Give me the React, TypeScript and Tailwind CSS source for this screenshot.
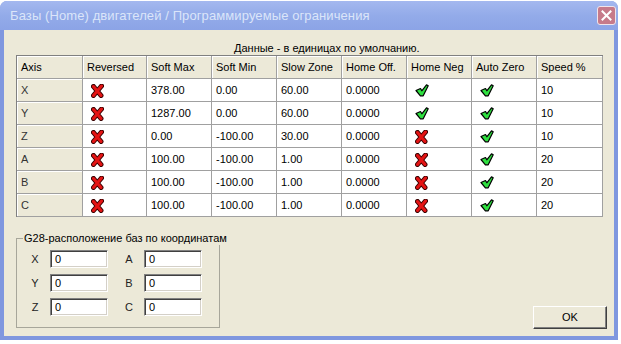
const columns = [
  { title: "Axis", w: "w-[66px]" },
  { title: "Reversed", w: "w-[64px]" },
  { title: "Soft Max", w: "w-[65px]" },
  { title: "Soft Min", w: "w-[65px]" },
  { title: "Slow Zone", w: "w-[65px]" },
  { title: "Home Off.", w: "w-[65px]" },
  { title: "Home Neg", w: "w-[65px]" },
  { title: "Auto Zero", w: "w-[65px]" },
  { title: "Speed %", w: "w-[66px]" },
];

type Row = {
  axis: string;
  reversed: boolean;
  softMax: string;
  softMin: string;
  slowZone: string;
  homeOff: string;
  homeNeg: boolean;
  autoZero: boolean;
  speed: string;
};

const rows: Row[] = [
  { axis: "X", reversed: false, softMax: "378.00", softMin: "0.00", slowZone: "60.00", homeOff: "0.0000", homeNeg: true, autoZero: true, speed: "10" },
  { axis: "Y", reversed: false, softMax: "1287.00", softMin: "0.00", slowZone: "60.00", homeOff: "0.0000", homeNeg: true, autoZero: true, speed: "10" },
  { axis: "Z", reversed: false, softMax: "0.00", softMin: "-100.00", slowZone: "30.00", homeOff: "0.0000", homeNeg: false, autoZero: true, speed: "10" },
  { axis: "A", reversed: false, softMax: "100.00", softMin: "-100.00", slowZone: "1.00", homeOff: "0.0000", homeNeg: false, autoZero: true, speed: "20" },
  { axis: "B", reversed: false, softMax: "100.00", softMin: "-100.00", slowZone: "1.00", homeOff: "0.0000", homeNeg: false, autoZero: true, speed: "20" },
  { axis: "C", reversed: false, softMax: "100.00", softMin: "-100.00", slowZone: "1.00", homeOff: "0.0000", homeNeg: false, autoZero: true, speed: "20" },
];

function CrossIcon() {
  return (
    <svg width="13" height="14" viewBox="0 0 13 14" className="block">
      <path d="M2.5 2.5 L10 11.5 M10.5 2 L2.5 11.5" stroke="#3a0000" strokeWidth="5" strokeLinecap="round" />
      <path d="M2.5 2.5 L10 11.5 M10.5 2 L2.5 11.5" stroke="#e41414" strokeWidth="3" strokeLinecap="round" />
    </svg>
  );
}

function CheckIcon() {
  return (
    <svg width="14" height="13" viewBox="0 0 14 13" className="block">
      <path
        d="M1 6.5 L5.5 4.5 L6.8 6.8 L11.5 0.8 L13.2 1.8 L8.2 11.8 L5.4 11.8 Z"
        fill="#2fe040"
        stroke="#000"
        strokeWidth="1.2"
        strokeLinejoin="round"
      />
    </svg>
  );
}

function Flag({ on }: { on: boolean }) {
  return <div className="pl-[4px] pt-[1px]">{on ? <CheckIcon /> : <CrossIcon />}</div>;
}

function Cell({ w, children, head }: { w: string; children: React.ReactNode; head?: boolean }) {
  return (
    <div
      className={`${w} h-[23px] shrink-0 flex items-center border-r border-b border-[#a0a0a0] px-[4px] ${
        head ? "bg-[#ece9d8] shadow-[inset_1px_1px_0_#ffffff]" : "bg-white"
      }`}
    >
      {children}
    </div>
  );
}

function Field({ label }: { label: string }) {
  return (
    <>
      <span className="w-[12px] text-center text-[11px] text-[#222]">{label}</span>
      <div className="w-[58px] h-[18px] bg-white border border-t-[#808080] border-l-[#808080] border-b-white border-r-white shadow-[inset_1px_1px_0_#404040,inset_-1px_-1px_0_#d4d0c8] pl-[4px] text-[11px] leading-[16px]">
        0
      </div>
    </>
  );
}

export default function App() {
  return (
    <div className="w-[621px] h-[344px] bg-white overflow-hidden font-['Liberation_Sans',Arial,sans-serif] text-black">
      <div className="mt-[1px] w-[618px] h-[339px] flex flex-col rounded-t-[7px] bg-[#7f97df] px-[4px] pb-[4px]">
        {/* Title bar */}
        <div className="h-[29px] flex items-center justify-between bg-gradient-to-b from-[#a4b8ef] via-[#93abe9] to-[#8ca4e6] -mx-[4px] px-[10px] rounded-t-[7px]">
          <span className="text-[13px] text-[#dbe5f9] tracking-[0.1px]">
            Базы (Home) двигателей / Программируемые ограничения
          </span>
          <div className="w-[19px] h-[19px] -mr-[8px] rounded-[3px] border border-[#f0e4ea] bg-[#c67a8a] flex items-center justify-center">
            <svg width="11" height="11" viewBox="0 0 11 11">
              <path d="M1.5 1.5 L9.5 9.5 M9.5 1.5 L1.5 9.5" stroke="#ffffff" strokeWidth="2" strokeLinecap="square" />
            </svg>
          </div>
        </div>

        {/* Client area */}
        <div className="flex-1 bg-[#ece9d8] flex flex-col">
          <div className="mt-[11px] h-[14px] pl-[230px] text-[11px] leading-[14px]">
            Данные - в единицах по умолчанию.
          </div>

          <div className="ml-[12px] w-[587px] border-l border-t border-[#808080] text-[11px]">
            <div className="flex">
              {columns.map((c) => (
                <Cell key={c.title} w={c.w} head>
                  {c.title}
                </Cell>
              ))}
            </div>
            {rows.map((r) => (
              <div key={r.axis} className="flex">
                <Cell w="w-[66px]" head>
                  <span className="text-[#333]">{r.axis}</span>
                </Cell>
                <Cell w="w-[64px]">
                  <Flag on={r.reversed} />
                </Cell>
                <Cell w="w-[65px]">{r.softMax}</Cell>
                <Cell w="w-[65px]">{r.softMin}</Cell>
                <Cell w="w-[65px]">{r.slowZone}</Cell>
                <Cell w="w-[65px]">{r.homeOff}</Cell>
                <Cell w="w-[65px]">
                  <Flag on={r.homeNeg} />
                </Cell>
                <Cell w="w-[65px]">
                  <Flag on={r.autoZero} />
                </Cell>
                <Cell w="w-[66px]">{r.speed}</Cell>
              </div>
            ))}
          </div>

          <div className="mt-[15px] flex items-end justify-between pl-[12px] pr-[7px]">
            <fieldset className="w-[204px] min-w-0 max-w-[204px] shrink-0 mb-[1px] border border-[#a7a69a] pb-[11px]">
              <legend className="ml-[6px] px-[1px] text-[11px] leading-[13px] whitespace-nowrap">
                G28-расположение баз по координатам
              </legend>
              <div className="mt-[5px] flex flex-col gap-[6px]">
                {[
                  ["X", "A"],
                  ["Y", "B"],
                  ["Z", "C"],
                ].map(([a, b]) => (
                  <div key={a} className="flex items-center">
                    <div className="ml-[12px] flex items-center gap-[9px]">
                      <Field label={a} />
                    </div>
                    <div className="ml-[15px] flex items-center gap-[9px]">
                      <Field label={b} />
                    </div>
                  </div>
                ))}
              </div>
            </fieldset>

            <button className="w-[74px] h-[23px] bg-[#ece9d8] border border-t-white border-l-white border-b-[#404040] border-r-[#404040] shadow-[inset_-1px_-1px_0_#808080] text-[11px]">
              OK
            </button>
          </div>
        </div>
      </div>
    </div>
  );
}
